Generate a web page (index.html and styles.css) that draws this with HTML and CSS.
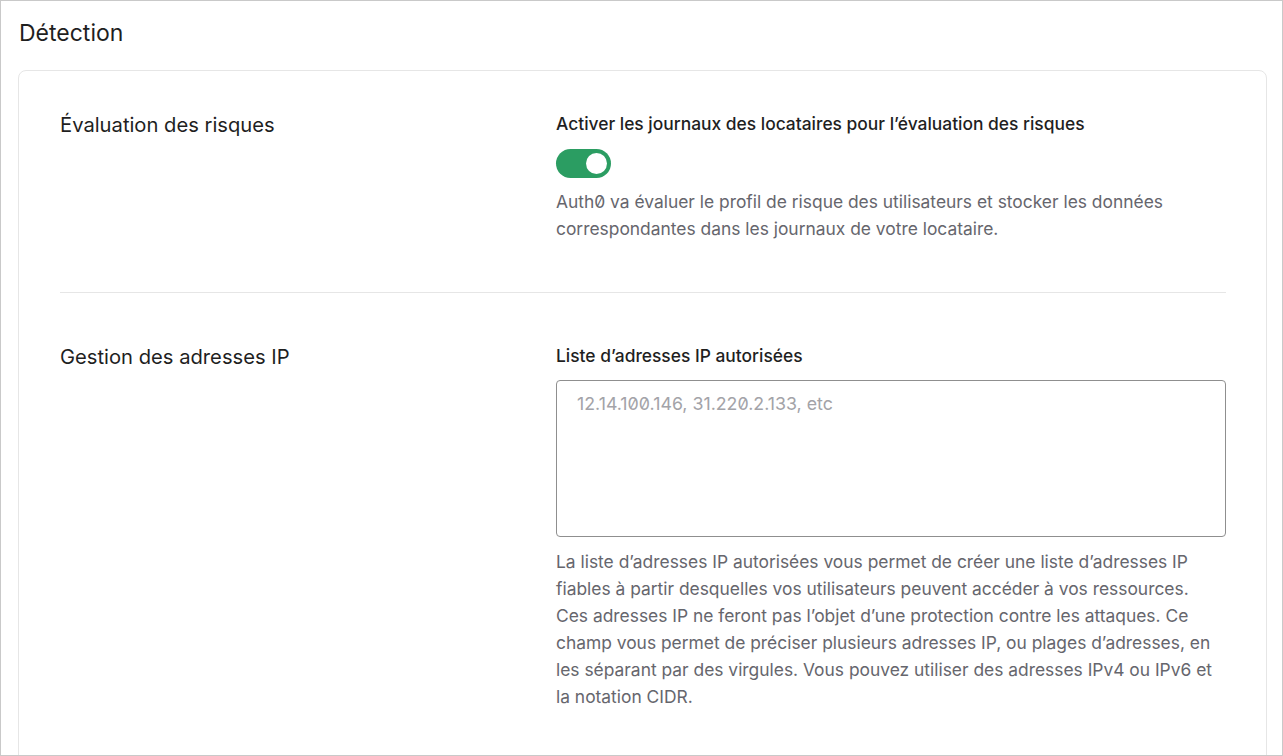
FILE: index.html
```html
<!DOCTYPE html>
<html lang="fr">
<head>
<meta charset="utf-8">
<title>Détection</title>
<link rel="stylesheet" href="styles.css">
</head>
<body>
<div class="frame">
  <h1 class="page-title">Détection</h1>
  <div class="card">
    <section class="row">
      <h2 class="row-title">Évaluation des risques</h2>
      <div class="field">
        <div class="field-label">Activer les journaux des locataires pour l’évaluation des risques</div>
        <div class="toggle" role="switch" aria-checked="true"><span class="knob"></span></div>
        <p class="help">Auth0 va évaluer le profil de risque des utilisateurs et stocker les données correspondantes dans les journaux de votre locataire.</p>
      </div>
    </section>
    <hr class="divider">
    <section class="row">
      <h2 class="row-title">Gestion des adresses IP</h2>
      <div class="field">
        <div class="field-label">Liste d’adresses IP autorisées</div>
        <textarea class="textarea" placeholder="12.14.100.146, 31.220.2.133, etc"></textarea>
        <p class="help help-ip">La liste d’adresses IP autorisées vous permet de créer une liste d’adresses IP fiables à partir desquelles vos utilisateurs peuvent accéder à vos ressources. Ces adresses IP ne feront pas l’objet d’une protection contre les attaques. Ce champ vous permet de préciser plusieurs adresses IP, ou plages d’adresses, en les séparant par des virgules. Vous pouvez utiliser des adresses IPv4 ou IPv6 et la notation CIDR.</p>
      </div>
    </section>
  </div>
</div>
</body>
</html>
```
FILE: styles.css
```css
html, body {
  margin: 0;
  padding: 0;
  background: #ffffff;
}
body {
  font-family: Inter, "Noto Sans", "Liberation Sans", sans-serif;
  font-feature-settings: "zero" 1;
  color: #1f1f1f;
}
.frame {
  box-sizing: border-box;
  width: 1283px;
  height: 756px;
  border: 1px solid #c9c9c9;
  padding: 0 15px 0 17px;
  overflow: hidden;
}
.page-title {
  margin: 0 0 21px;
  padding: 16px 0 0 1px;
  font-size: 23px;
  line-height: 32px;
  font-weight: 400;
  color: #1f1f1f;
}
.card {
  border: 1px solid #e6e6e6;
  border-radius: 8px;
  padding: 39px 40px 80px 41px;
}
.row {
  display: grid;
  grid-template-columns: minmax(0, 1fr) 670px;
}
.row-title {
  margin: 0;
  padding-top: 1px;
  font-size: 20.2px;
  line-height: 28px;
  font-weight: 400;
  color: #1f1f1f;
}
.field {
  display: flex;
  flex-direction: column;
  align-items: flex-start;
}
.field-label {
  font-size: 17.4px;
  line-height: 28px;
  font-weight: 500;
  color: #1f1f1f;
}
.toggle {
  margin-top: 11px;
  width: 55px;
  height: 29px;
  border-radius: 15px;
  background: #2b9d62;
  position: relative;
}
.knob {
  position: absolute;
  right: 4px;
  top: 4px;
  width: 21px;
  height: 21px;
  border-radius: 50%;
  background: #ffffff;
}
.help {
  margin: 10px 0 0;
  font-size: 17.4px;
  line-height: 27px;
  color: #66666d;
}
.divider {
  border: 0;
  border-top: 1px solid #e6e6e6;
  margin: 50px 0 49px;
}
.textarea {
  margin-top: 10px;
  box-sizing: border-box;
  width: 100%;
  height: 157px;
  border: 1px solid #8f8f8f;
  border-radius: 4px;
  padding: 11px 20px;
  font-family: inherit;
  font-feature-settings: "zero" 1;
  font-size: 17.8px;
  line-height: 24px;
  resize: none;
  outline: none;
}
.textarea::placeholder {
  color: #a3a3a8;
}
.help-ip {
  margin-top: 11px;
  max-width: 662px;
}
```
